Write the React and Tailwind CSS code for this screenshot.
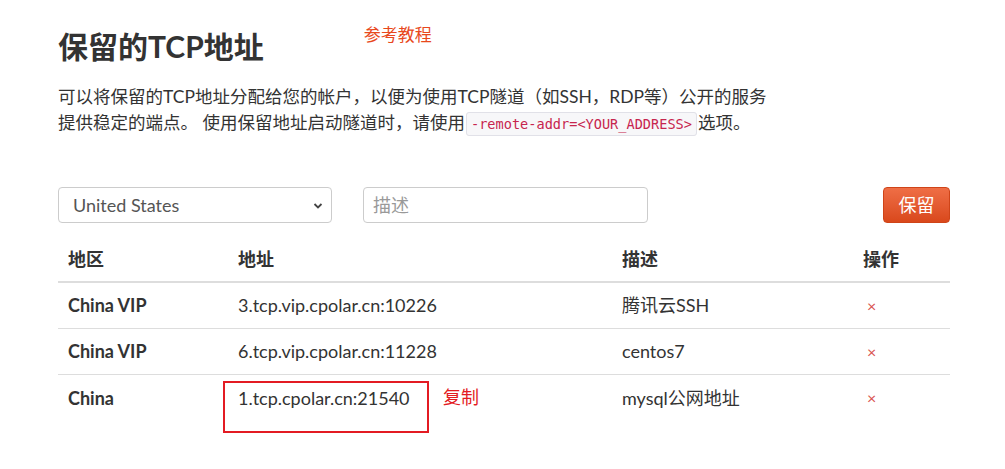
import React from "react";

const rows = [
  { region: "China VIP", addr: "3.tcp.vip.cpolar.cn:10226", desc: "腾讯云SSH" },
  { region: "China VIP", addr: "6.tcp.vip.cpolar.cn:11228", desc: "centos7" },
  { region: "China", addr: "1.tcp.cpolar.cn:21540", desc: "mysql公网地址", mark: true },
];

export default function App() {
  return (
    <div
      className="w-[1005px] h-[469px] bg-white text-[#333] overflow-hidden"
      style={{ fontFamily: 'Lato, "Noto Sans CJK SC", sans-serif' }}
    >
      <div className="pl-[58px] w-[950px]">
        {/* 标题 */}
        <div className="flex items-start pt-[26px]">
          <h1 className="text-[30px] leading-[40px] font-bold text-[#333]">保留的TCP地址</h1>
          <a className="ml-[100px] -mt-[3px] text-[17px] leading-[24px] text-[#e8481c]">参考教程</a>
        </div>

        {/* 说明 */}
        <p className="mt-[18px] text-[17.5px] leading-[26px] text-[#333]">
          可以将保留的TCP地址分配给您的帐户，以便为使用TCP隧道（如SSH，RDP等）公开的服务
          <br />
          提供稳定的端点。 使用保留地址启动隧道时，请使用
          <code
            className="mx-[1px] px-[4px] py-[3px] text-[13.6px] text-[#c7254e] bg-[#f7f7f9] border border-[#e1e1e8] rounded-[3px]"
            style={{ fontFamily: '"DejaVu Sans Mono", monospace' }}
          >
            -remote-addr=&lt;YOUR_ADDRESS&gt;
          </code>
          选项。
        </p>

        {/* 表单 */}
        <div className="mt-[50px] flex items-center">
          <div className="relative w-[274px] h-[36px] border border-[#ccc] rounded-[4px] flex items-center pl-[14px]">
            <span className="text-[18px] text-[#555]">United States</span>
            <svg className="absolute right-[8px] top-[14px]" width="10" height="8" viewBox="0 0 10 8">
              <path d="M1.5 2l3.5 3.5L8.5 2" fill="none" stroke="#444" strokeWidth="1.8" />
            </svg>
          </div>
          <div className="ml-[31px] w-[285px] h-[36px] border border-[#ccc] rounded-[4px] flex items-center pl-[9px]">
            <span className="text-[18px] text-[#999]">描述</span>
          </div>
          <button className="ml-auto w-[67px] h-[36px] rounded-[4px] text-white text-[18px] bg-gradient-to-b from-[#ef6e45] to-[#d9481b] border border-[#cf4418]">
            保留
          </button>
        </div>

        {/* 表格 */}
        <div className="mt-[15px]">
          <div className="grid grid-cols-[170px_384px_241px_97px] h-[45px] items-center border-b-2 border-[#ddd] font-bold text-[18px]">
            <div className="pl-[10px]">地区</div>
            <div className="pl-[10px]">地址</div>
            <div className="pl-[10px]">描述</div>
            <div className="pl-[10px]">操作</div>
          </div>
          {rows.map((r, i) => (
            <div
              key={i}
              className={
                "relative grid grid-cols-[170px_384px_241px_97px] h-[46px] items-center text-[18px] " +
                (i < rows.length - 1 ? "border-b border-[#ddd]" : "")
              }
            >
              <div className="pl-[10px] font-bold">{r.region}</div>
              <div className="pl-[10px]">{r.addr}</div>
              <div className="pl-[10px]">{r.desc}</div>
              <div className="pl-[14px] text-[#d9534f] text-[16px]">×</div>
              {r.mark && (
                <>
                  <div className="absolute left-[165px] top-[6px] w-[206px] h-[52px] border-2 border-[#e31b23]" />
                  <span className="absolute left-[385px] top-[9px] text-[#e31b23]">复制</span>
                </>
              )}
            </div>
          ))}
        </div>
      </div>
    </div>
  );
}
